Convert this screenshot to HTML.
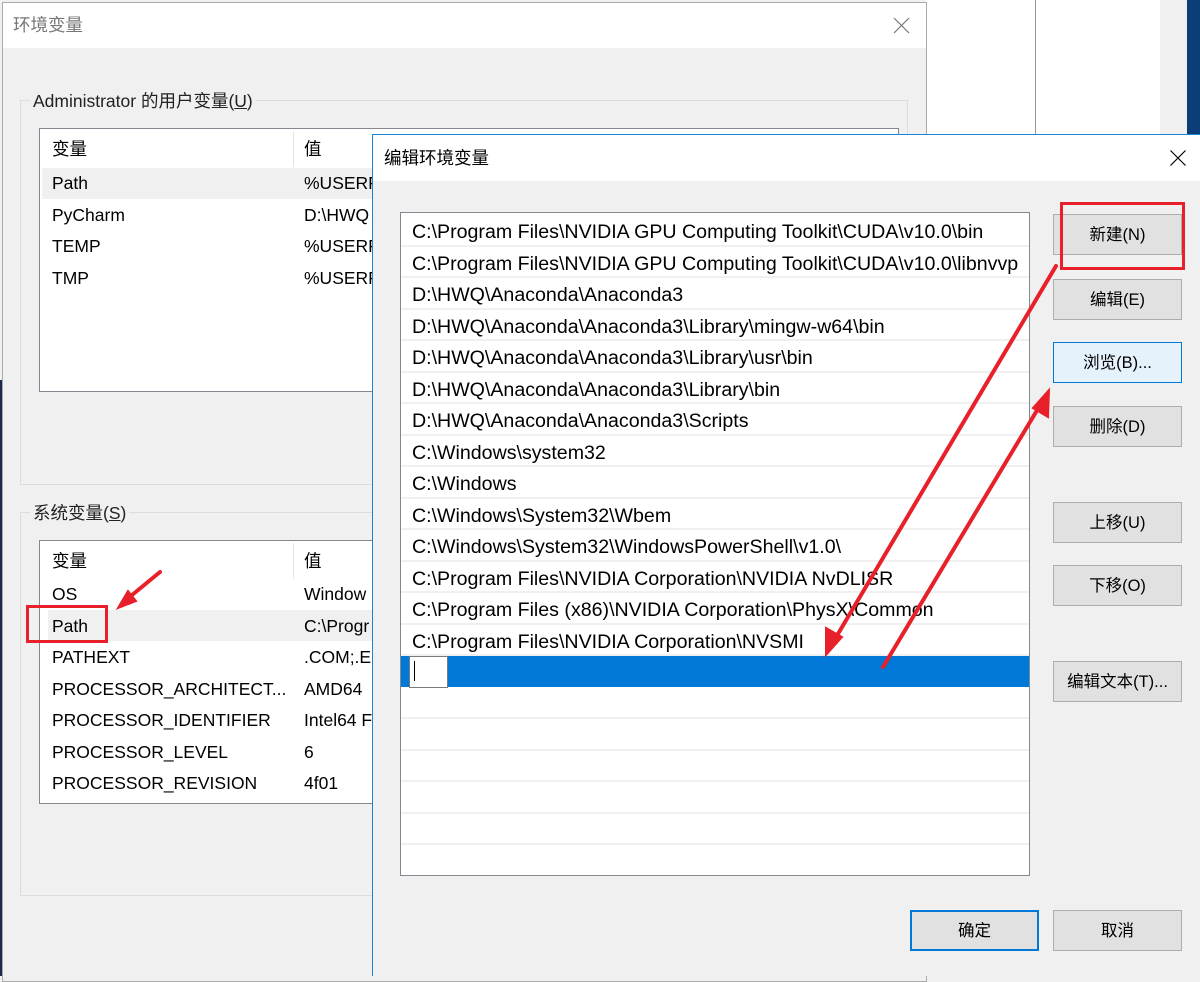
<!DOCTYPE html>
<html><head><meta charset="utf-8"><style>
*{margin:0;padding:0;box-sizing:border-box}
body{width:1200px;height:976px;position:relative;overflow:hidden;background:#f0f0f0;font-family:"Liberation Sans","Noto Sans CJK SC",sans-serif;font-size:17.5px;color:#000}
.abs{position:absolute}
.t{position:absolute;white-space:nowrap;line-height:20px}
.btn{position:absolute;width:129px;height:41px;background:#e1e1e1;border:1px solid #adadad;text-align:center;line-height:40px;font-size:16.5px}
.row{position:absolute;left:0;right:0;height:31.5px;border-bottom:2px solid #f0f0f0;padding-left:11px;line-height:34px;white-space:nowrap;overflow:hidden;font-size:19.6px}
</style></head><body>
<div class="abs" style="left:926px;top:0;width:274px;height:134px;background:#fff"></div>
<div class="abs" style="left:1035px;top:0;width:1px;height:134px;background:#999"></div>
<div class="abs" style="left:1160px;top:0;width:27px;height:134px;background:#f0f0f0"></div>
<div class="abs" style="left:1187px;top:0;width:13px;height:134px;background:#0b3d78"></div>
<div class="abs" style="left:0;top:380px;width:2px;height:596px;background:#1a2a4a"></div>
<div class="abs" style="left:2px;top:2px;width:925px;height:980px;border:1px solid #aaa;background:#f0f0f0"></div>
<div class="abs" style="left:3px;top:3px;width:923px;height:45px;background:#fff"></div>
<div class="t" style="left:13px;top:15px;color:#777">环境变量</div>
<svg class="abs" style="left:893px;top:17px" width="17" height="17"><path d="M1 1L16 16M16 1L1 16" stroke="#777" stroke-width="1.2"/></svg>
<div class="abs" style="left:20px;top:100px;width:888px;height:385px;border:1px solid #dcdcdc"></div>
<div class="t" style="left:30px;top:91px;background:#f0f0f0;padding:0 3px;color:#222">Administrator 的用户变量(<u>U</u>)</div>
<div class="abs" style="left:39px;top:128px;width:860px;height:264px;background:#fff;border:1px solid #828790"></div>
<div class="abs" style="left:42px;top:168px;width:340px;height:31px;background:#f0f0f0"></div>
<div class="abs" style="left:293px;top:131px;width:1px;height:36px;background:#e5e5e5"></div>
<div class="t" style="left:52px;top:139px">变量</div><div class="t" style="left:304px;top:139px">值</div>
<div class="t" style="left:52px;top:173px">Path</div><div class="t" style="left:304px;top:173px">%USERP</div>
<div class="t" style="left:52px;top:205px">PyCharm</div><div class="t" style="left:304px;top:205px">D:\HWQ</div>
<div class="t" style="left:52px;top:236px">TEMP</div><div class="t" style="left:304px;top:236px">%USERP</div>
<div class="t" style="left:52px;top:268px">TMP</div><div class="t" style="left:304px;top:268px">%USERP</div>

<div class="abs" style="left:20px;top:512px;width:888px;height:384px;border:1px solid #dcdcdc"></div>
<div class="t" style="left:30px;top:503px;background:#f0f0f0;padding:0 3px;color:#222">系统变量(<u>S</u>)</div>
<div class="abs" style="left:39px;top:540px;width:340px;height:264px;background:#fff;border:1px solid #828790"></div>
<div class="abs" style="left:48px;top:610px;width:330px;height:31px;background:#f0f0f0"></div>
<div class="abs" style="left:293px;top:543px;width:1px;height:36px;background:#e5e5e5"></div>
<div class="t" style="left:52px;top:551px">变量</div><div class="t" style="left:304px;top:551px">值</div>
<div class="t" style="left:52px;top:584px">OS</div><div class="t" style="left:304px;top:584px">Window</div>
<div class="t" style="left:52px;top:616px">Path</div><div class="t" style="left:304px;top:616px">C:\Progr</div>
<div class="t" style="left:52px;top:647px">PATHEXT</div><div class="t" style="left:304px;top:647px">.COM;.E</div>
<div class="t" style="left:52px;top:679px">PROCESSOR_ARCHITECT...</div><div class="t" style="left:304px;top:679px">AMD64</div>
<div class="t" style="left:52px;top:710px">PROCESSOR_IDENTIFIER</div><div class="t" style="left:304px;top:710px">Intel64 F</div>
<div class="t" style="left:52px;top:742px">PROCESSOR_LEVEL</div><div class="t" style="left:304px;top:742px">6</div>
<div class="t" style="left:52px;top:773px">PROCESSOR_REVISION</div><div class="t" style="left:304px;top:773px">4f01</div>
<div class="abs" style="left:26px;top:605px;width:82px;height:38px;border:3px solid #e8202a"></div>

<div class="abs" style="left:372px;top:134px;width:828px;height:842px;background:#f0f0f0;border:1px solid #1883d7;border-right:none;border-bottom:none"></div>
<div class="abs" style="left:373px;top:135px;width:827px;height:46px;background:#fff"></div>
<div class="t" style="left:384px;top:148px">编辑环境变量</div>
<svg class="abs" style="left:1170px;top:150px" width="16" height="16"><path d="M0.5 0.5L15.5 15.5M15.5 0.5L0.5 15.5" stroke="#000" stroke-width="1.2"/></svg>
<div class="abs" style="left:400px;top:212px;width:630px;height:664px;background:#fff;border:1px solid #828790">
<div style="position:relative;top:2px">
<div class="row" style="top:0">C:\Program Files\NVIDIA GPU Computing Toolkit\CUDA\v10.0\bin</div>
<div class="row" style="top:31.5px">C:\Program Files\NVIDIA GPU Computing Toolkit\CUDA\v10.0\libnvvp</div>
<div class="row" style="top:63px">D:\HWQ\Anaconda\Anaconda3</div>
<div class="row" style="top:94.5px">D:\HWQ\Anaconda\Anaconda3\Library\mingw-w64\bin</div>
<div class="row" style="top:126px">D:\HWQ\Anaconda\Anaconda3\Library\usr\bin</div>
<div class="row" style="top:157.5px">D:\HWQ\Anaconda\Anaconda3\Library\bin</div>
<div class="row" style="top:189px">D:\HWQ\Anaconda\Anaconda3\Scripts</div>
<div class="row" style="top:220.5px">C:\Windows\system32</div>
<div class="row" style="top:252px">C:\Windows</div>
<div class="row" style="top:283.5px">C:\Windows\System32\Wbem</div>
<div class="row" style="top:315px">C:\Windows\System32\WindowsPowerShell\v1.0\</div>
<div class="row" style="top:346.5px">C:\Program Files\NVIDIA Corporation\NVIDIA NvDLISR</div>
<div class="row" style="top:378px">C:\Program Files (x86)\NVIDIA Corporation\PhysX\Common</div>
<div class="row" style="top:409.5px">C:\Program Files\NVIDIA Corporation\NVSMI</div>
<div class="row" style="top:441px;background:#0078d7;border-bottom:none;height:31px"></div>
<div class="row" style="top:472.5px"></div>
<div class="row" style="top:504px"></div>
<div class="row" style="top:535.5px"></div>
<div class="row" style="top:567px"></div>
<div class="row" style="top:598.5px"></div>
</div></div>
<div class="abs" style="left:409px;top:656px;width:39px;height:32px;background:#fff;border:1px solid #7a7a7a"></div>
<div class="abs" style="left:414px;top:661px;width:1px;height:20px;background:#000"></div>

<div class="btn" style="left:1053px;top:214px">新建(N)</div>
<div class="btn" style="left:1053px;top:279px">编辑(E)</div>
<div class="btn" style="left:1053px;top:342px;background:#e5f1fb;border-color:#0078d7">浏览(B)...</div>
<div class="btn" style="left:1053px;top:406px">删除(D)</div>
<div class="btn" style="left:1053px;top:502px">上移(U)</div>
<div class="btn" style="left:1053px;top:565px">下移(O)</div>
<div class="btn" style="left:1053px;top:661px">编辑文本(T)...</div>
<div class="btn" style="left:910px;top:910px;border:2px solid #0078d7;line-height:38px">确定</div>
<div class="btn" style="left:1053px;top:910px">取消</div>
<div class="abs" style="left:1060px;top:202px;width:125px;height:68px;border:3px solid #e8202a"></div>

<svg class="abs" style="left:0;top:0" width="1200" height="976">
<g stroke="#e8202a" stroke-width="4" stroke-linecap="round" fill="#e8202a">
<line x1="1056" y1="266" x2="832" y2="644"/>
<path d="M826 655L826 628L842 637Z" stroke-width="2"/>
<line x1="883" y1="667" x2="1042" y2="402"/>
<path d="M1049 390L1048 417L1033 408Z" stroke-width="2"/>
<line x1="160" y1="572" x2="126" y2="600"/>
<path d="M118 608L128 591L136 601Z" stroke-width="2"/>
</g></svg>
</body></html>
